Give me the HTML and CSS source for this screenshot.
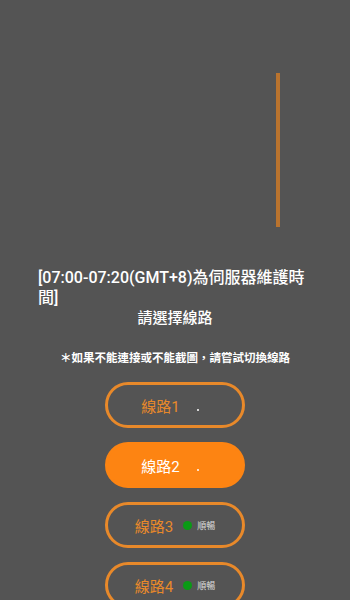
FILE: index.html
```html
<!DOCTYPE html>
<html lang="zh-Hant">
<head>
    <meta charset="UTF-8">
    <meta name="viewport" content="width=device-width, initial-scale=1.0">
    <title>請選擇線路</title>
    <link rel="stylesheet" href="styles.css">
</head>
<body>
    <div class="top">
        <div class="bar"></div>
    </div>

    <div class="info">
        <p class="notice">[07:00-07:20(GMT+8)為伺服器維護時間]</p>
        <h1 class="title">請選擇線路</h1>
        <p class="hint">＊如果不能連接或不能截圖，請嘗試切換線路</p>
    </div>

    <div class="lines">
        <button class="line">線路1<span class="status"><span class="blank"></span></span></button>
        <button class="line active">線路2<span class="status"><span class="blank"></span></span></button>
        <button class="line">線路3<span class="status"><span class="dot"></span>順暢</span></button>
        <button class="line">線路4<span class="status"><span class="dot"></span>順暢</span></button>
    </div>
</body>
</html>
```

FILE: styles.css
```css
body {
    margin: 0;
    background: #545454;
    font-family: Roboto, "Noto Sans CJK TC", sans-serif;
    color: #fff;
    overflow: hidden;
}
.top {
    height: 268px;
    box-sizing: border-box;
    padding: 73px 70px 0 0;
    display: flex;
    justify-content: flex-end;
}
.bar {
    width: 4px;
    height: 154px;
    background: #b9732e;
}
.info {
    padding: 0 38px;
}
.notice {
    margin: 0;
    font-size: 16px;
    line-height: 20px;
    font-weight: 500;
}
.title {
    margin: 0;
    font-size: 15px;
    line-height: 20px;
    font-weight: 500;
    text-align: center;
}
.hint {
    margin: 22px 0 0;
    font-size: 11.5px;
    line-height: 16px;
    font-weight: 700;
    text-align: center;
    white-space: nowrap;
}
.lines {
    display: flex;
    flex-direction: column;
    align-items: center;
    gap: 14px;
    margin-top: 16px;
}
.line {
    width: 140px;
    height: 46px;
    border: 3px solid #e8892a;
    border-radius: 23px;
    background: transparent;
    color: #e8892a;
    font-family: inherit;
    font-size: 15px;
    display: flex;
    align-items: center;
    justify-content: center;
    padding: 0;
}
.line.active {
    background: #fd8412;
    border-color: #fd8412;
    color: #fff;
}
.status {
    display: flex;
    align-items: center;
    margin-left: 10px;
    font-size: 9px;
    color: #ddd;
}
.blank {
    width: 2px;
    height: 2px;
    margin: 10px 10px 0 7px;
    background: #fff;
    border-radius: 1px;
}
.dot {
    width: 9px;
    height: 9px;
    border-radius: 50%;
    background: #0a9a16;
    margin-right: 5px;
}
```
